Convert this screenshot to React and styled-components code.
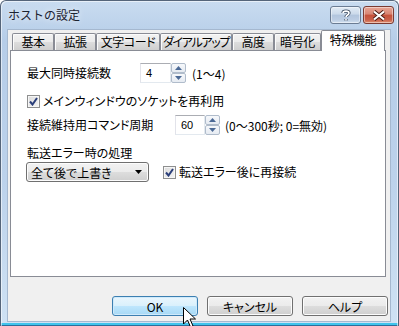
import React from 'react';
import styled, { createGlobalStyle } from 'styled-components';

const Global = createGlobalStyle`
  html, body { margin: 0; padding: 0; background: #ffffff; }
  body {
    font-family: "Noto Sans CJK JP", "Noto Sans", sans-serif;
    font-size: 12px;
    color: #000;
  }
  * { box-sizing: border-box; }
`;

const Window = styled.div`
  position: relative;
  width: 399px;
  height: 326px;
  display: flex;
  flex-direction: column;
  padding: 0 8px 5px 7px;
  border: 1px solid #55657a;
  border-bottom: none;
  border-radius: 6px 6px 0 0;
  overflow: hidden;
  background:
    linear-gradient(0deg, #2d6d9a 0, #2d6d9a 1px, #3fc4ec 1px, #3fc4ec 3px, transparent 3px),
    linear-gradient(180deg, #c9dcf0 0%, #b6cde8 12%, #bcd2eb 55%, #cfe2f4 100%);
  box-shadow: inset 1px 1px 0 rgba(255, 255, 255, 0.55), inset -1px 0 0 rgba(255, 255, 255, 0.55);
`;

const TitleBar = styled.div`
  height: 29px;
  display: flex;
  align-items: flex-start;
`;

const Title = styled.div`
  padding: 5px 0 0 0;
  font-size: 12px;
  line-height: 18px;
  color: #1c2330;
  text-shadow: 0 0 6px rgba(255, 255, 255, 0.9);
`;

const CaptionButtons = styled.div`
  margin-left: auto;
  margin-top: 5px;
  margin-right: -4px;
  display: flex;
  gap: 2px;
`;

const CaptionButton = styled.div`
  width: ${(p) => p.$w}px;
  height: 18px;
  border: 1px solid ${(p) => (p.$close ? '#7a3a32' : '#6b7c93')};
  border-radius: 3px;
  display: flex;
  align-items: center;
  justify-content: center;
  box-shadow: inset 0 0 0 1px rgba(255, 255, 255, 0.45);
  background: ${(p) =>
    p.$close
      ? 'linear-gradient(180deg, #e7a596 0%, #d88573 45%, #c5503a 50%, #c9604a 80%, #e09070 100%)'
      : 'linear-gradient(180deg, #e2ebf5 0%, #cbd9ea 45%, #b2c5dd 50%, #bccde3 80%, #d3e1f0 100%)'};
`;

const Client = styled.div`
  flex: 1;
  display: flex;
  flex-direction: column;
  background: #f0f0f0;
  padding: 0 2px 0 2px;
  box-shadow: 0 0 0 1px #a5b8cf;
`;

const TabStrip = styled.div`
  height: 21px;
  margin-bottom: -1px;
  padding-left: 2px;
  display: flex;
  align-items: flex-end;
  position: relative;
  z-index: 1;
`;

const Tab = styled.div`
  width: ${(p) => p.$w}px;
  height: ${(p) => (p.$active ? 21 : 17)}px;
  margin-bottom: ${(p) => (p.$active ? 0 : 1)}px;
  border: 1px solid #898c95;
  border-bottom: none;
  border-radius: 2px 2px 0 0;
  display: flex;
  justify-content: center;
  padding-top: ${(p) => (p.$active ? 2 : 1)}px;
  line-height: 14px;
  font-size: 12px;
  font-feature-settings: "palt";
  letter-spacing: ${(p) => p.$ls ?? -0.4}px;
  white-space: nowrap;
  overflow: hidden;
  background: ${(p) =>
    p.$active
      ? '#ffffff'
      : 'linear-gradient(180deg, #f2f2f2 0%, #ebebeb 50%, #dddddd 51%, #cfcfcf 100%)'};
  box-shadow: ${(p) => (p.$active ? 'none' : 'inset 1px 1px 0 #fbfbfb')};
`;

const Panel = styled.div`
  width: 376px;
  height: 227px;
  border: 1px solid #898c95;
  background: #ffffff;
  padding: 12px 0 0 16px;
  display: flex;
  flex-direction: column;
`;

const Row = styled.div`
  display: flex;
  align-items: center;
  height: ${(p) => p.$h || 20}px;
  margin-top: ${(p) => p.$mt || 0}px;
  margin-left: ${(p) => p.$ml || 0}px;
`;

const Label = styled.div`
  width: ${(p) => (p.$w ? `${p.$w}px` : 'auto')};
  font-feature-settings: "palt";
  white-space: nowrap;
  line-height: 14px;
`;

const Note = styled.div`
  margin-left: ${(p) => p.$ml || 6}px;
  font-feature-settings: "palt";
  white-space: nowrap;
`;

const TextBox = styled.div`
  width: ${(p) => p.$w}px;
  height: 20px;
  border: 1px solid #e3e9ef;
  border-top-color: #abadb3;
  border-left-color: #e2e3ea;
  padding-left: 5px;
  display: flex;
  align-items: center;
  background: #fff;
  font-family: "Liberation Sans", "Noto Sans", sans-serif;
  font-size: 11px;
`;

const Spinner = styled.div`
  width: 15px;
  height: 20px;
  display: flex;
  flex-direction: column;
`;

const SpinButton = styled.div`
  flex: 1;
  border: 1px solid #b0bccb;
  border-radius: 2px;
  background: linear-gradient(180deg, #f6f8fb 0%, #e6ebf2 100%);
  display: flex;
  align-items: center;
  justify-content: center;
`;

const CheckBox = styled.div`
  width: 13px;
  height: 13px;
  border: 1px solid #8e8f8f;
  background: linear-gradient(135deg, #dcdcdc 0%, #f4f4f4 100%);
  box-shadow: inset 0 0 0 1px #f6f6f6;
  display: flex;
  align-items: center;
  justify-content: center;
  margin-right: 3px;
  flex: none;
`;

const Combo = styled.div`
  width: 123px;
  height: 20px;
  border: 1px solid #707070;
  border-radius: 3px;
  margin-left: -1px;
  padding: 0 6px 0 4px;
  display: flex;
  align-items: center;
  justify-content: space-between;
  background: linear-gradient(180deg, #f2f2f2 0%, #ebebeb 50%, #dddddd 51%, #cfcfcf 100%);
  box-shadow: inset 0 0 0 1px #fcfcfc;
  font-feature-settings: "palt";
`;

const ButtonRow = styled.div`
  display: flex;
  justify-content: flex-end;
  gap: 9px;
  margin-top: 19px;
`;

const Button = styled.div`
  width: 86px;
  height: 20px;
  border: 1px solid ${(p) => (p.$hot ? '#3c7fb1' : '#707070')};
  border-radius: 3px;
  display: flex;
  align-items: center;
  justify-content: center;
  font-feature-settings: "palt";
  background: ${(p) =>
    p.$hot
      ? 'linear-gradient(180deg, #eaf6fd 0%, #d9f0fc 50%, #bee6fd 51%, #a7d9f5 100%)'
      : 'linear-gradient(180deg, #f2f2f2 0%, #ebebeb 50%, #dddddd 51%, #cfcfcf 100%)'};
  box-shadow: inset 0 0 0 1px ${(p) => (p.$hot ? '#cfeafb' : '#fcfcfc')};
`;

const Cursor = styled.svg`
  position: absolute;
  left: 182px;
  top: 306px;
`;

const Up = () => (
  <svg width="7" height="4" viewBox="0 0 7 4">
    <path d="M0 4 L3.5 0 L7 4 Z" fill="#4c6a96" />
  </svg>
);
const Down = () => (
  <svg width="7" height="4" viewBox="0 0 7 4">
    <path d="M0 0 L7 0 L3.5 4 Z" fill="#4c6a96" />
  </svg>
);

const Spin = () => (
  <Spinner>
    <SpinButton><Up /></SpinButton>
    <SpinButton><Down /></SpinButton>
  </Spinner>
);

const Check = () => (
  <CheckBox>
    <svg width="9" height="9" viewBox="0 0 9 9">
      <path d="M1 4.5 L3.5 7.5 L8 1" fill="none" stroke="#2b3f7a" strokeWidth="2" />
    </svg>
  </CheckBox>
);

const tabs = [
  { t: '基本', w: 42 },
  { t: '拡張', w: 42 },
  { t: '文字コード', w: 64 },
  { t: 'ダイアルアップ', w: 72, ls: -1.3 },
  { t: '高度', w: 42 },
  { t: '暗号化', w: 47 },
  { t: '特殊機能', w: 64, a: true },
];

export default function App() {
  return (
    <>
      <Global />
      <Window>
        <TitleBar>
          <Title>ホストの設定</Title>
          <CaptionButtons>
            <CaptionButton $w={31}>
              <svg width="10" height="12" viewBox="0 0 10 12">
                <path
                  d="M2 4 C2 1.5 8 1.5 8 4 C8 6 5 6 5 8 M5 10 L5 11.5"
                  fill="none"
                  stroke="#3b4a60"
                  strokeWidth="3.2"
                />
                <path
                  d="M2 4 C2 1.5 8 1.5 8 4 C8 6 5 6 5 8 M5 10 L5 11.5"
                  fill="none"
                  stroke="#ffffff"
                  strokeWidth="1.6"
                />
              </svg>
            </CaptionButton>
            <CaptionButton $w={31} $close>
              <svg width="14" height="11" viewBox="0 0 14 11">
                <path d="M2 1.5 L12 9.5 M12 1.5 L2 9.5" stroke="#4a1c14" strokeWidth="4" />
                <path d="M2 1.5 L12 9.5 M12 1.5 L2 9.5" stroke="#ffffff" strokeWidth="2.2" />
              </svg>
            </CaptionButton>
          </CaptionButtons>
        </TitleBar>
        <Client>
          <TabStrip>
            {tabs.map((tab) => (
              <Tab key={tab.t} $w={tab.w} $active={tab.a} $ls={tab.ls}>
                {tab.t}
              </Tab>
            ))}
          </TabStrip>
          <Panel>
            <Row>
              <Label $w={113}>最大同時接続数</Label>
              <TextBox $w={31}>4</TextBox>
              <Spin />
              <Note>(1〜4)</Note>
            </Row>
            <Row $h={14} $mt={11}>
              <Check />
              <Label>メインウィンドウのソケットを再利用</Label>
            </Row>
            <Row $mt={7}>
              <Label $w={148}>接続維持用コマンド周期</Label>
              <TextBox $w={30}>60</TextBox>
              <Spin />
              <Note $ml={5}>(0〜300秒; 0=無効)</Note>
            </Row>
            <Row $h={14} $mt={11}>
              <Label>転送エラー時の処理</Label>
            </Row>
            <Row $mt={2}>
              <Combo>
                <span>全て後で上書き</span>
                <svg width="7" height="4" viewBox="0 0 7 4">
                  <path d="M0 0 L7 0 L3.5 4 Z" fill="#000" />
                </svg>
              </Combo>
              <Row $ml={14}>
                <Check />
                <Label>転送エラー後に再接続</Label>
              </Row>
            </Row>
          </Panel>
          <ButtonRow>
            <Button $hot>OK</Button>
            <Button>キャンセル</Button>
            <Button>ヘルプ</Button>
          </ButtonRow>
        </Client>
        <Cursor width="13" height="21" viewBox="0 0 13 21">
          <path
            d="M0.5 0.5 L0.5 17 L4.5 13 L7.5 20 L10 19 L7 12 L12.5 12 Z"
            fill="#ffffff"
            stroke="#000000"
            strokeWidth="1"
          />
        </Cursor>
      </Window>
    </>
  );
}
